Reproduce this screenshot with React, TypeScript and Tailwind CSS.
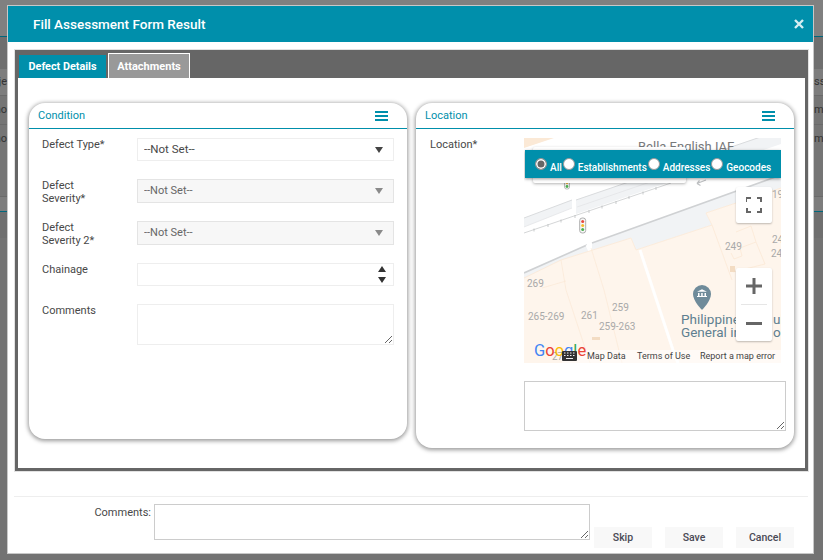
import { ReactNode } from "react";

const teal = "#008fab";

function MenuIcon() {
  return (
    <svg width="13" height="10" viewBox="0 0 13 10" fill={teal}>
      <rect width="13" height="2" />
      <rect y="4" width="13" height="2" />
      <rect y="8" width="13" height="2" />
    </svg>
  );
}

function Panel({ title, height, children }: { title: string; height: string; children: ReactNode }) {
  return (
    <div className={`w-[378px] ${height} rounded-[16px] bg-white shadow-[0_1px_4px_1px_rgba(0,0,0,0.4)]`}>
      <div className="flex h-[26px] items-center justify-between border-b border-[#008fab] pl-[9px] pr-[19px] text-[11px] text-[#008fab]">
        <span className="pt-px">{title}</span>
        <MenuIcon />
      </div>
      <div className="pl-[13px] pt-[9px]">{children}</div>
    </div>
  );
}

function Label({ children }: { children: ReactNode }) {
  return <label className="w-[95px] shrink-0 pr-4 text-[11px] leading-[13px] text-[#484848]">{children}</label>;
}

function Caret({ color }: { color: string }) {
  return (
    <svg className="absolute right-[11px] top-1/2 -translate-y-1/2" width="8" height="6" viewBox="0 0 8 6" fill={color}>
      <path d="M0 0h8L4 6z" />
    </svg>
  );
}

function SelectField({ label, disabled, h }: { label: ReactNode; disabled?: boolean; h: string }) {
  return (
    <div className={`mb-[18px] flex ${h}`}>
      <Label>{label}</Label>
      <div className="relative w-[257px]">
        <select
          disabled={disabled}
          className={`block h-full w-full appearance-none border pl-[6px] outline-none ${
            disabled ? "border-[#e4e4e4] bg-[#f7f7f7] text-[11px] text-[#666]" : "border-[#eeeeee] bg-white text-[11.500px] text-[#484848]"
          }`}
        >
          <option>--Not Set--</option>
        </select>
        <Caret color={disabled ? "#8a8a8a" : "#444"} />
      </div>
    </div>
  );
}

function Radio({ text, checked }: { text: string; checked?: boolean }) {
  return (
    <label className="flex items-center">
      <input
        type="radio"
        name="locationType"
        defaultChecked={checked}
        className="mb-[6px] mr-[3px] h-[12px] w-[12px] appearance-none rounded-full border border-[#999] bg-white checked:bg-[#666] checked:shadow-[inset_0_0_0_1.500px_#fff]"
      />
      <span>{text}</span>
    </label>
  );
}

function MapDrawing() {
  return (
    <svg className="absolute inset-0" width="257" height="225" viewBox="0 0 257 225" fontFamily="Roboto, sans-serif">
      <rect width="257" height="225" fill="#ffffff" />
      <path d="M0 0h30L0 10z" fill="#fbe9d6" />
      {/* upper road */}
      <path d="M0 80 48 62V70L0 89zM52 62 160 25 257 -8V6L52 76z" fill="#f1f3f5" />
      <path d="M0 80 48 62M52 62 257 -8" stroke="#d9dbdd" strokeWidth="1" fill="none" />
      <path d="M0 89 48 70M53 69 170 29" stroke="#e3e5e7" strokeWidth="0.8" fill="none" />
      {/* tick line */}
      <path d="M0 95 147 45" stroke="#c9cbcd" strokeWidth="0.8" />
      <path d="M10 90.500v3M24 86v3M37 81.500v3M51 77v3M65 72v3M78 67.500v3M92 63v3M105 58v3M119 53.500v3M132 49v3" stroke="#b5b7b9" strokeWidth="0.7" />
      {/* lower road and pavement */}
      <path d="M0 135 63 107 68 118 0 145zM68 105 257 37V50L182 75 188 87 112 112 107 100 68 118z" fill="#f1f3f5" />
      <path d="M0 135 63 107M68 105 257 37" stroke="#cfd1d3" strokeWidth="1.600" fill="none" />
      <path d="M63 107 68 118" stroke="#ffffff" strokeWidth="3" />
      {/* building blocks */}
      <path d="M0 140 37 122 107 100 112 112 188 87 182 75 257 50V225H0z" fill="#fef5ec" />
      <path d="M0 140 37 122 107 100 112 112 188 87 182 75 257 50" stroke="#fbe8d5" strokeWidth="0.8" fill="none" />
      <path d="M37 122 42 152 66 225M67 110 80 152 98 225M18 150 42 143" stroke="#fbe8d5" strokeWidth="0.7" fill="none" />
      <path d="M116 112 149 212 154 225" stroke="#ffffff" strokeWidth="3" fill="none" />
      <path d="M188 87 208 142M212 94 227 88 232 104 216 110 218 118 210 121 207 115M232 104 241 126 209 134" stroke="#fbe8d5" strokeWidth="0.8" fill="none" />
      <rect x="206" y="128" width="5" height="6" fill="#f3dcc3" />
      <rect x="68" y="199" width="8" height="3" fill="#f3dcc3" />
      <path d="M182 42l-9 3.500 2.500-3m-2.500 3 3.500 2" stroke="#bdbfc1" strokeWidth="1.200" fill="none" />
      <g>
        <rect x="40.500" y="41" width="5" height="10" rx="2" fill="#f5f5f5" stroke="#aaa" strokeWidth="0.8" />
        <circle cx="43" cy="48.500" r="1.400" fill="#4caf50" />
        <circle cx="43" cy="45" r="1.200" fill="#f5b942" />
        <rect x="55.700" y="80" width="6" height="15" rx="2.500" fill="#f7f7f7" stroke="#a5a5a5" strokeWidth="0.900" />
        <circle cx="58.700" cy="83.500" r="1.500" fill="#e8483f" />
        <circle cx="58.700" cy="87.500" r="1.500" fill="#f7bb2e" />
        <circle cx="58.700" cy="91.500" r="1.500" fill="#4caf50" />
      </g>
      <g fill="#a9a9a9" fontSize="10">
        <text x="248" y="60">19</text>
        <text x="201" y="112">249</text>
        <text x="248" y="105">24</text>
        <text x="247" y="119">24</text>
        <text x="3" y="149">269</text>
        <text x="4" y="182">265-269</text>
        <text x="57" y="181">261</text>
        <text x="88" y="173">259</text>
        <text x="75" y="192">259-263</text>
        <text x="28" y="222">27</text>
      </g>
      <path d="M178 147a9 9 0 0 0-9 9c0 7 9 16 9 16s9-9 9-16a9 9 0 0 0-9-9z" fill="#6f8b9a" />
      <path d="M173 158h10v1h-10zM174 155h1.500v3H174zM177.200 155h1.500v3h-1.500zM180.500 155h1.500v3h-1.500zM173 153.800l5-2.500 5 2.500z" fill="#fff" />
      <g fill="#5f7f90" fontSize="13.500">
        <text x="157" y="186">Philippine</text>
        <text x="157" y="199">General in</text>
        <text x="249" y="186">ula</text>
        <text x="249" y="199">ou</text>
      </g>
      <text x="114" y="13" fill="#77797b" fontSize="13">Bella English IAE</text>
    </svg>
  );
}

function MapBox() {
  return (
    <div className="relative h-[225px] w-[257px] overflow-hidden font-['Roboto',sans-serif]">
      <MapDrawing />
      <div className="absolute left-[9px] top-[9px] h-[36px] w-[153px] rounded-[2px] bg-white shadow-[0_1px_3px_rgba(0,0,0,0.3)]" />
      <div className="absolute left-[1px] top-[12px] flex h-[28px] w-[256px] items-center gap-px bg-[#008fab] pl-[10px] pt-[6px] text-[10px] font-medium text-white shadow-[0_1px_3px_rgba(0,0,0,0.4)]">
        <Radio text="All" checked />
        <Radio text="Establishments" />
        <Radio text="Addresses" />
        <Radio text="Geocodes" />
      </div>
      <div className="absolute left-[212px] top-[49px] flex h-[36px] w-[36px] items-center justify-center rounded-[2px] bg-white shadow-[0_1px_2px_rgba(0,0,0,0.25)]">
        <svg width="16" height="16" viewBox="0 0 16 16" fill="none" stroke="#666" strokeWidth="2">
          <path d="M0 5V1h5M11 1h4v4M15 11v4h-4M5 15H1v-4" />
        </svg>
      </div>
      <div className="absolute left-[212px] top-[130px] flex h-[73px] w-[36px] flex-col items-center rounded-[2px] bg-white shadow-[0_1px_2px_rgba(0,0,0,0.25)]">
        <div className="flex h-[36px] items-center justify-center">
          <svg width="16" height="16" viewBox="0 0 16 16" fill="#666">
            <path d="M6.500 0h3v6.500H16v3H9.500V16h-3V9.500H0v-3h6.500z" />
          </svg>
        </div>
        <div className="h-px w-[26px] bg-[#e6e6e6]" />
        <div className="flex h-[36px] items-center justify-center">
          <div className="h-[3px] w-[16px] bg-[#666]" />
        </div>
      </div>
      <div className="absolute bottom-0 left-[38px] flex h-[13px] w-[219px] items-center bg-white/50 pl-[25px] text-[9px] text-[#444]">
        <span className="w-[50px]">Map Data</span>
        <span className="w-[63px]">Terms of Use</span>
        <span>Report a map error</span>
      </div>
      <div className="absolute bottom-[2px] left-[10px] text-[16.500px] leading-[20px] font-['Roboto',sans-serif]">
        <span className="text-[#4285f4]">G</span>
        <span className="text-[#ea4335]">o</span>
        <span className="text-[#fbbc05]">o</span>
        <span className="text-[#4285f4]">g</span>
        <span className="text-[#34a853]">l</span>
        <span className="text-[#ea4335]">e</span>
      </div>
      <svg className="absolute left-[38px] top-[213px]" width="15" height="10" viewBox="0 0 15 10">
        <rect width="15" height="10" rx="1" fill="#333" />
        <path d="M2 2h1.500M5 2h1.500M8 2h1.500M11 2h1.500M2 4.500h1.500M5 4.500h1.500M8 4.500h1.500M11 4.500h1.500M4 7.500h7" stroke="#eee" strokeWidth="1" />
      </svg>
    </div>
  );
}

function FooterButton({ children }: { children: ReactNode }) {
  return (
    <button className="h-[21px] w-[58px] bg-[#f8f8f8] text-[10.500px] font-medium text-[#4a4a55]">{children}</button>
  );
}

function BackgroundRow({ left, right, className }: { left: string; right: string; className: string }) {
  return (
    <div className={`flex items-center justify-between text-[11px] text-[#333] ${className}`}>
      <span className="w-[7px] overflow-hidden whitespace-nowrap [direction:rtl]">{left}</span>
      <span className="w-[9px] overflow-hidden whitespace-nowrap">{right}</span>
    </div>
  );
}

export default function App() {
  return (
    <div className="relative h-[560px] w-[823px] overflow-hidden bg-[#737373] font-['Roboto',sans-serif]">
      <div className="h-[37px] border-b border-[#00677c] bg-[#808080]" />
      <div className="h-[32px] bg-[#6f6f6f]" />
      <BackgroundRow left="oje" right="ss" className="h-[27px] border-b border-[#6a6a6a] bg-[#7d7d7d]" />
      <BackgroundRow left="no" right="m" className="h-[29px] border-b border-[#6a6a6a] bg-[#757575]" />
      <BackgroundRow left="no" right="m" className="h-[29px] bg-[#757575]" />
      <div className="h-[43px] border-b border-[#6a6a6a] bg-[#757575]" />
      <div className="h-[14px] bg-[#7d7d7d]" />
      <div className="h-[27px] border-t border-[#00677c] bg-[#6f6f6f]" />

      <div className="absolute left-[7px] top-[5px] h-[549px] w-[807px] border border-[#c8c8c8] bg-white">
        <div className="flex h-[36px] items-center justify-between bg-[#008fab] pl-[25px] pr-[9px] text-white">
          <span className="text-[13.500px] font-medium">Fill Assessment Form Result</span>
          <svg width="10" height="10" viewBox="0 0 10 10" stroke="#d5eef3" strokeWidth="2.400">
            <path d="M1 1l8 8M9 1l-8 8" />
          </svg>
        </div>

        <div className="ml-[7px] mt-[8px] h-[421px] w-[793px] border-[3px] border-[#666] bg-white outline outline-[#e2e2e2]">
          <div className="flex h-[25px] items-end gap-[2px] bg-[#666] pl-px">
            <div className="flex h-[23px] w-[87px] items-center justify-center bg-[#008fab] pt-px text-[10.800px] font-bold text-white">
              Defect Details
            </div>
            <div className="flex h-[25px] w-[82px] items-center justify-center border border-b-0 border-white bg-[#999] pt-[3px] text-[11px] font-bold text-white">
              Attachments
            </div>
          </div>

          <div className="flex items-start gap-[9px] pl-[11px] pt-[25px]">
            <Panel title="Condition" height="h-[336px]">
              <SelectField label="Defect Type*" h="h-[23px]" />
              <SelectField
                label={
                  <>
                    Defect
                    <br />
                    Severity*
                  </>
                }
                disabled
                h="h-[24px]"
              />
              <SelectField
                label={
                  <>
                    Defect
                    <br />
                    Severity 2*
                  </>
                }
                disabled
                h="h-[24px]"
              />
              <div className="mb-[18px] flex">
                <Label>Chainage</Label>
                <div className="relative h-[23px] w-[257px] border border-[#eeeeee]">
                  <svg className="absolute right-[7px] top-[2px]" width="8" height="17" viewBox="0 0 8 17" fill="#333">
                    <path d="M0 6 4 0l4 6zM0 11h8l-4 6z" />
                  </svg>
                </div>
              </div>
              <div className="flex">
                <Label>Comments</Label>
                <textarea className="h-[41px] w-[257px] border border-[#eeeeee] outline-none" />
              </div>
            </Panel>

            <Panel title="Location" height="h-[345px]">
              <div className="flex">
                <Label>
                  <span className="pl-px">Location*</span>
                </Label>
                <div>
                  <MapBox />
                  <textarea className="mt-[18px] block h-[50px] w-[262px] border border-[#cccccc] outline-none" />
                </div>
              </div>
            </Panel>
          </div>
        </div>

        <div className="ml-[6px] mt-[25px] flex w-[794px] items-end border-t border-[#eeeeee] pt-[7px]">
          <span className="mb-[21px] w-[140px] pr-[3px] text-right text-[11px] leading-[13px] text-[#484848]">Comments:</span>
          <textarea className="block h-[36px] w-[436px] border border-[#cccccc] outline-none" />
          <div className="mb-[-8px] ml-[4px] flex gap-[13px]">
            <FooterButton>Skip</FooterButton>
            <FooterButton>Save</FooterButton>
            <FooterButton>Cancel</FooterButton>
          </div>
        </div>
      </div>
    </div>
  );
}
